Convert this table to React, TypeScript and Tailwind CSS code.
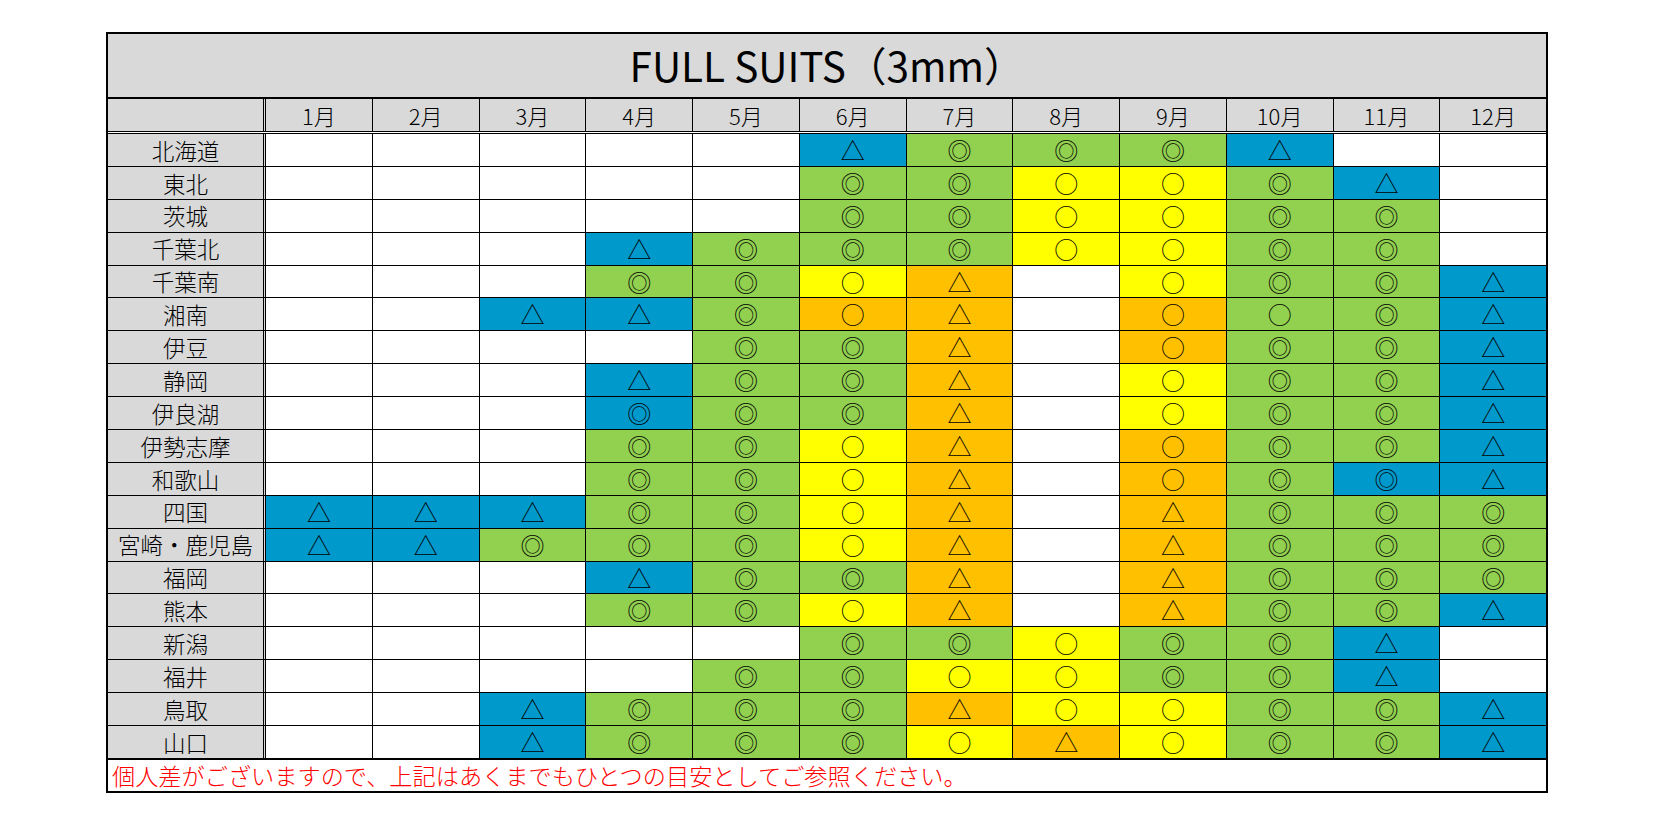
import React from "react";

// colour key: B = blue, G = green, Y = yellow, O = orange, blank = white
const bg: Record<string, string> = {
  B: "bg-[#0099cc]",
  G: "bg-[#92d050]",
  Y: "bg-[#ffff00]",
  O: "bg-[#ffc000]",
};

const months = ["1月", "2月", "3月", "4月", "5月", "6月", "7月", "8月", "9月", "10月", "11月", "12月"];

const rows: [string, string[]][] = [
  ["北海道", ["", "", "", "", "", "B△", "G◎", "G◎", "G◎", "B△", "", ""]],
  ["東北", ["", "", "", "", "", "G◎", "G◎", "Y○", "Y○", "G◎", "B△", ""]],
  ["茨城", ["", "", "", "", "", "G◎", "G◎", "Y○", "Y○", "G◎", "G◎", ""]],
  ["千葉北", ["", "", "", "B△", "G◎", "G◎", "G◎", "Y○", "Y○", "G◎", "G◎", ""]],
  ["千葉南", ["", "", "", "G◎", "G◎", "Y○", "O△", "", "Y○", "G◎", "G◎", "B△"]],
  ["湘南", ["", "", "B△", "B△", "G◎", "O○", "O△", "", "O○", "G○", "G◎", "B△"]],
  ["伊豆", ["", "", "", "", "G◎", "G◎", "O△", "", "O○", "G◎", "G◎", "B△"]],
  ["静岡", ["", "", "", "B△", "G◎", "G◎", "O△", "", "Y○", "G◎", "G◎", "B△"]],
  ["伊良湖", ["", "", "", "B◎", "G◎", "G◎", "O△", "", "Y○", "G◎", "G◎", "B△"]],
  ["伊勢志摩", ["", "", "", "G◎", "G◎", "Y○", "O△", "", "O○", "G◎", "G◎", "B△"]],
  ["和歌山", ["", "", "", "G◎", "G◎", "Y○", "O△", "", "O○", "G◎", "B◎", "B△"]],
  ["四国", ["B△", "B△", "B△", "G◎", "G◎", "Y○", "O△", "", "O△", "G◎", "G◎", "G◎"]],
  ["宮崎・鹿児島", ["B△", "B△", "G◎", "G◎", "G◎", "Y○", "O△", "", "O△", "G◎", "G◎", "G◎"]],
  ["福岡", ["", "", "", "B△", "G◎", "G◎", "O△", "", "O△", "G◎", "G◎", "G◎"]],
  ["熊本", ["", "", "", "G◎", "G◎", "Y○", "O△", "", "O△", "G◎", "G◎", "B△"]],
  ["新潟", ["", "", "", "", "", "G◎", "G◎", "Y○", "G◎", "G◎", "B△", ""]],
  ["福井", ["", "", "", "", "G◎", "G◎", "Y○", "Y○", "G◎", "G◎", "B△", ""]],
  ["鳥取", ["", "", "B△", "G◎", "G◎", "G◎", "O△", "Y○", "Y○", "G◎", "G◎", "B△"]],
  ["山口", ["", "", "B△", "G◎", "G◎", "G◎", "Y○", "O△", "Y○", "G◎", "G◎", "B△"]],
];

function Cell({ value, last }: { value: string; last: boolean }) {
  const color = value ? bg[value[0]] : "bg-white";
  return (
    <div
      className={`flex-1 flex items-center justify-center text-[24px] ${color} ${last ? "" : "border-r border-black"}`}
    >
      {value.slice(1)}
    </div>
  );
}

export default function App() {
  return (
    <div className="w-[1656px] h-[826px] bg-white pt-[32px] pl-[106px] font-['Noto_Sans_CJK_JP',sans-serif] font-light text-black">
      <div className="w-[1442px] border-2 border-black">
        <div className="h-[65px] border-b-2 border-black bg-[#d9d9d9] flex items-center justify-center text-[40.5px] font-normal leading-none">
          FULL SUITS（3mm）
        </div>

        <div className="h-[35px] flex border-b-[3px] border-double border-black text-[22px] leading-none">
          <div className="w-[158px] border-r-[3px] border-double border-black bg-[#d9d9d9]" />
          {months.map((m, i) => (
            <div
              key={m}
              className={`flex-1 flex items-center justify-center bg-[#d9d9d9] ${i < 11 ? "border-r border-black" : ""}`}
            >
              {m}
            </div>
          ))}
        </div>

        {rows.map(([name, cells], r) => (
          <div
            key={name}
            className={`flex leading-none ${r === rows.length - 1 ? "h-[33.9px] border-b-2" : "h-[32.9px] border-b"} border-black`}
          >
            <div className="w-[158px] border-r-[3px] border-double border-black bg-[#d9d9d9] flex items-center justify-center text-[22.5px]">
              {name}
            </div>
            {cells.map((c, i) => (
              <Cell key={i} value={c} last={i === 11} />
            ))}
          </div>
        ))}

        <div className="h-[31px] flex items-center pl-[4px] text-[23.2px] leading-none text-[#ff0000]">
          個人差がございますので、上記はあくまでもひとつの目安としてご参照ください。
        </div>
      </div>
    </div>
  );
}
